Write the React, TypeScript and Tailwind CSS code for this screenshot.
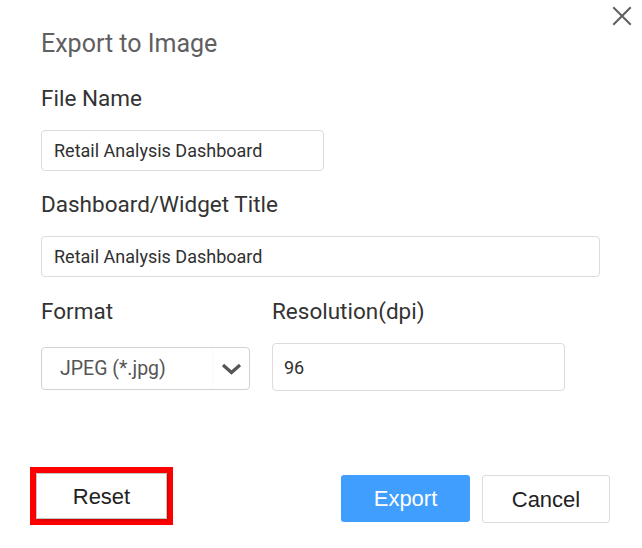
import React from "react";

export default function App() {
  return (
    <div className="relative w-[642px] h-[548px] bg-white overflow-hidden font-['Roboto',_'Liberation_Sans',_sans-serif]">
      <button className="absolute left-[611px] top-[5px] w-[22px] h-[22px] flex items-center justify-center" aria-label="Close">
        <svg width="20" height="20" viewBox="0 0 20 20">
          <path d="M2 2 L18 18 M18 2 L2 18" stroke="#5f5f5f" strokeWidth="2" strokeLinecap="square" fill="none" />
        </svg>
      </button>

      <div className="flex flex-col pl-[41px] pr-[42px] pt-[30px]">
        <div className="text-[25px] leading-[28px] text-[#606060]">Export to Image</div>

        <div className="mt-[27px] text-[22.5px] leading-[26px] text-[#333333]">File Name</div>
        <div className="mt-[19px] w-[283px] h-[41px] flex items-center px-[12px] border border-[#dcdcdc] rounded-[4px] text-[18px] text-[#303030]">
          Retail Analysis Dashboard
        </div>

        <div className="mt-[20px] text-[22.5px] leading-[26px] text-[#333333]">Dashboard/Widget Title</div>
        <div className="mt-[19px] w-[559px] h-[41px] flex items-center px-[12px] border border-[#dcdcdc] rounded-[4px] text-[18px] text-[#303030]">
          Retail Analysis Dashboard
        </div>

        <div className="mt-[21px] flex gap-[22px]">
          <div className="flex flex-col w-[209px]">
            <div className="text-[22.5px] leading-[26px] text-[#333333]">Format</div>
            <div className="mt-[23px] h-[43px] flex items-stretch border border-[#d2d2d2] rounded-[4px]">
              <div className="flex-1 flex items-center pl-[18px] text-[19.5px] text-[#555555]">JPEG (*.jpg)</div>
              <div className="w-[37px] border-l border-[#fafafa] flex items-center justify-center">
                <svg width="21" height="12" viewBox="0 0 21 12">
                  <path d="M2 2 L10.5 9.5 L19 2" stroke="#555555" strokeWidth="3.2" fill="none" strokeLinejoin="miter" />
                </svg>
              </div>
            </div>
          </div>
          <div className="flex flex-col w-[293px]">
            <div className="text-[22.5px] leading-[26px] text-[#333333]">Resolution(dpi)</div>
            <div className="mt-[19px] h-[48px] flex items-center px-[11px] border border-[#dcdcdc] rounded-[4px] text-[18px] text-[#303030]">
              96
            </div>
          </div>
        </div>
      </div>

      <div className="flex items-start pl-[30px] pr-[32px] mt-[76px]">
        <div className="border-[6px] border-[#ff0000]">
          <button className="w-[131px] h-[46px] bg-white border border-[#c6c6c6] shadow-[1px_1px_2px_rgba(0,0,0,0.25)] text-[22px] text-[#222] font-['Liberation_Sans',_Arial,_sans-serif] flex items-center justify-center">
            Reset
          </button>
        </div>
        <div className="ml-auto mt-[8px] flex gap-[12px]">
          <button className="w-[129px] h-[47px] bg-[#409eff] rounded-[3px] text-white text-[22px] font-['Liberation_Sans',_Arial,_sans-serif] flex items-center justify-center">
            Export
          </button>
          <button className="w-[128px] h-[48px] bg-white border border-[#dcdcdc] rounded-[3px] text-[#222] text-[22px] font-['Liberation_Sans',_Arial,_sans-serif] flex items-center justify-center">
            Cancel
          </button>
        </div>
      </div>
    </div>
  );
}
